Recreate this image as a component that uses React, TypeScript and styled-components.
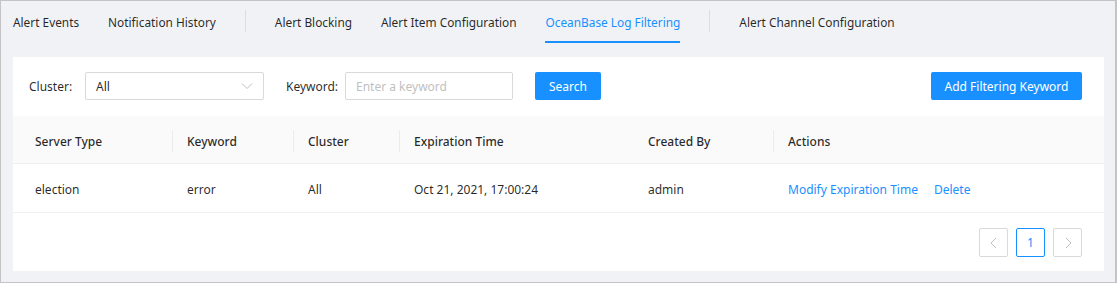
import React from "react";
import styled, { createGlobalStyle } from "styled-components";

const GlobalStyle = createGlobalStyle`
  html, body { margin: 0; padding: 0; }
  body { font-family: "Noto Sans", "Open Sans", sans-serif; font-size: 12px; color: rgba(0,0,0,0.85); }
  * { box-sizing: border-box; }
`;

const Frame = styled.div`
  width: 1117px;
  height: 283px;
  background: #f0f2f5;
  border: 1px solid #c4c4c4;
  border-right-width: 2px;
  padding: 0 11px 0 12px;
  display: flex;
  flex-direction: column;
`;

const TabBar = styled.nav`
  display: flex;
  align-items: flex-start;
  gap: 29px;
  height: 42px;
`;

const Tab = styled.div<{ $active?: boolean }>`
  height: 42px;
  display: flex;
  align-items: center;
  white-space: nowrap;
  font-size: 11.85px;
  color: ${(p) => (p.$active ? "#1890ff" : "rgba(0,0,0,0.85)")};
  border-bottom: 2px solid ${(p) => (p.$active ? "#1890ff" : "transparent")};
  padding-top: 2px;
`;

const TabDivider = styled.span`
  width: 1px;
  height: 22px;
  margin-top: 9px;
  background: #dcdde0;
`;

const Card = styled.section`
  margin-top: 14px;
  background: #fff;
  height: 214px;
  display: flex;
  flex-direction: column;
`;

const FilterRow = styled.div`
  display: flex;
  align-items: center;
  padding: 15px 22px 16px 16px;
`;

const FieldLabel = styled.label<{ $gap?: number; $width: number }>`
  margin-left: ${(p) => p.$gap ?? 0}px;
  width: ${(p) => p.$width}px;
  white-space: nowrap;
`;

const SelectBox = styled.div`
  width: 179px;
  height: 28px;
  border: 1px solid #d9d9d9;
  border-radius: 2px;
  display: flex;
  align-items: center;
  justify-content: space-between;
  padding: 0 10px;
  color: rgba(0,0,0,0.85);
`;

const TextInput = styled.input`
  width: 168px;
  height: 28px;
  border: 1px solid #d9d9d9;
  border-radius: 2px;
  padding: 0 10px;
  font: inherit;
  color: rgba(0,0,0,0.85);
  &::placeholder { color: #bfbfbf; }
`;

const PrimaryButton = styled.button<{ $gap?: number; $width: number }>`
  margin-left: ${(p) => p.$gap ?? 0}px;
  width: ${(p) => p.$width}px;
  height: 28px;
  border: none;
  border-radius: 2px;
  background: #1890ff;
  color: #fff;
  font: inherit;
  padding: 0;
`;

const Spacer = styled.div`
  flex: 1;
`;

const Grid = styled.div`
  display: grid;
  grid-template-columns: 159px 121px 106px 234px 140px 1fr;
`;

const HeadCell = styled.div<{ $divider?: boolean; $first?: boolean }>`
  position: relative;
  height: 48px;
  background: #fafafa;
  border-bottom: 1px solid #f0f0f0;
  display: flex;
  align-items: center;
  padding: 3px 0 0 ${(p) => (p.$first ? 22 : 15)}px;
  font-weight: 500;
  color: rgba(0,0,0,0.85);
  &::before {
    content: "";
    display: ${(p) => (p.$divider ? "block" : "none")};
    position: absolute;
    left: 0;
    top: 14px;
    width: 1px;
    height: 22px;
    background: #ececec;
  }
`;

const BodyCell = styled.div<{ $first?: boolean }>`
  height: 49px;
  border-bottom: 1px solid #f0f0f0;
  display: flex;
  align-items: center;
  gap: 16px;
  padding: 3px 0 0 ${(p) => (p.$first ? 22 : 15)}px;
  white-space: nowrap;
`;

const ActionLink = styled.a`
  color: #1890ff;
  text-decoration: none;
  cursor: pointer;
`;

const Pager = styled.div`
  display: flex;
  justify-content: flex-end;
  gap: 8px;
  padding: 15px 22px 0 0;
`;

const PageItem = styled.div<{ $active?: boolean; $disabled?: boolean }>`
  width: 29px;
  height: 29px;
  border: 1px solid ${(p) => (p.$active ? "#1890ff" : "#d9d9d9")};
  border-radius: 2px;
  display: flex;
  align-items: center;
  justify-content: center;
  color: ${(p) => (p.$active ? "#1890ff" : "#bfbfbf")};
`;

const Chevron = ({ dir }: { dir: "left" | "right" | "down" }) => {
  const d =
    dir === "left" ? "M7 1 L2 6 L7 11" : dir === "right" ? "M3 1 L8 6 L3 11" : "M1 3.5 L6 8.5 L11 3.5";
  return (
    <svg width={dir === "down" ? 12 : 10} height="12" viewBox={dir === "down" ? "0 0 12 12" : "0 0 10 12"} fill="none">
      <path d={d} stroke="currentColor" strokeWidth="1" />
    </svg>
  );
};

const Caret = styled.span`
  color: #bfbfbf;
  display: flex;
`;

export default function App() {
  return (
    <>
      <GlobalStyle />
      <Frame>
        <TabBar>
          <Tab>Alert Events</Tab>
          <Tab>Notification History</Tab>
          <TabDivider />
          <Tab>Alert Blocking</Tab>
          <Tab>Alert Item Configuration</Tab>
          <Tab $active>OceanBase Log Filtering</Tab>
          <TabDivider />
          <Tab>Alert Channel Configuration</Tab>
        </TabBar>
        <Card>
          <FilterRow>
            <FieldLabel $width={56}>Cluster:</FieldLabel>
            <SelectBox>
              <span>All</span>
              <Caret>
                <Chevron dir="down" />
              </Caret>
            </SelectBox>
            <FieldLabel $gap={22} $width={59}>Keyword:</FieldLabel>
            <TextInput placeholder="Enter a keyword" />
            <PrimaryButton $gap={22} $width={66}>Search</PrimaryButton>
            <Spacer />
            <PrimaryButton $width={151}>Add Filtering Keyword</PrimaryButton>
          </FilterRow>
          <Grid>
            <HeadCell $first>Server Type</HeadCell>
            <HeadCell $divider>Keyword</HeadCell>
            <HeadCell $divider>Cluster</HeadCell>
            <HeadCell $divider>Expiration Time</HeadCell>
            <HeadCell>Created By</HeadCell>
            <HeadCell $divider>Actions</HeadCell>
            <BodyCell $first>election</BodyCell>
            <BodyCell>error</BodyCell>
            <BodyCell>All</BodyCell>
            <BodyCell>Oct 21, 2021, 17:00:24</BodyCell>
            <BodyCell>admin</BodyCell>
            <BodyCell>
              <ActionLink>Modify Expiration Time</ActionLink>
              <ActionLink>Delete</ActionLink>
            </BodyCell>
          </Grid>
          <Pager>
            <PageItem $disabled>
              <Chevron dir="left" />
            </PageItem>
            <PageItem $active>1</PageItem>
            <PageItem $disabled>
              <Chevron dir="right" />
            </PageItem>
          </Pager>
        </Card>
      </Frame>
    </>
  );
}
